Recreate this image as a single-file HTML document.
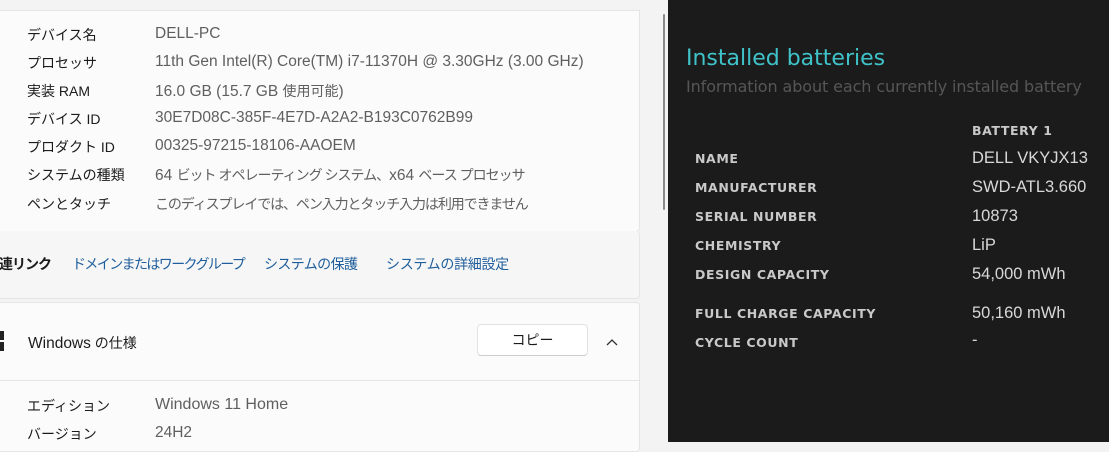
<!DOCTYPE html>
<html><head><meta charset="utf-8"><style>
*{margin:0;padding:0;box-sizing:border-box}
body{width:1109px;height:442px;overflow:hidden;position:relative;background:#f3f3f3;font-family:"Liberation Sans","Noto Sans CJK JP",sans-serif;}
.a{position:absolute;white-space:nowrap}
.l{font-size:14px;color:#1b1b1b}
.v{font-size:15.5px;color:#5f5f5f}
.v .j{font-size:14px}
.card{position:absolute;background:#fbfbfb;border:1px solid #e5e5e5;border-radius:4px}
.lk{font-size:14px;color:#1f5e9c;letter-spacing:-1.6px}
#dark{position:absolute;left:668px;top:0;width:441px;height:442px;background:#1b1b1b}
.dl{position:absolute;left:27px;font-weight:bold;color:#c9c9c9;letter-spacing:0.6px;white-space:nowrap;font-family:"DejaVu Sans",sans-serif;font-size:12.5px}
.dv{position:absolute;left:304px;font-size:16.5px;color:#d8d8d8;white-space:nowrap}
</style></head><body>
<div class="card" style="left:-4px;top:10px;width:644px;height:222px;border-radius:0 0 4px 4px"></div>
<div class="card" style="left:-4px;top:231px;width:644px;height:68px;background:#f6f6f6;border-top:none"></div>
<div class="card" style="left:-4px;top:302px;width:644px;height:150px"></div>
<div class="a" style="left:0;top:380px;width:640px;height:1px;background:#e5e5e5"></div>
<div class="a" style="left:663px;top:14px;width:2px;height:196px;background:#8a8a8a;border-radius:1px"></div>

<div class="a l" style="left:27px;top:25px">デバイス名</div><div class="a v" style="left:155px;top:25px">DELL-PC</div>
<div class="a l" style="left:27px;top:53px">プロセッサ</div><div class="a v" style="left:155px;top:53px">11th Gen Intel(R) Core(TM) i7-11370H @ 3.30GHz (3.00 GHz)</div>
<div class="a l" style="left:27px;top:81px">実装 RAM</div><div class="a v" style="left:155px;top:81px">16.0 GB (15.7 GB <span class="j">使用可能</span>)</div>
<div class="a l" style="left:27px;top:109px">デバイス ID</div><div class="a v" style="left:155px;top:109px">30E7D08C-385F-4E7D-A2A2-B193C0762B99</div>
<div class="a l" style="left:27px;top:137px">プロダクト ID</div><div class="a v" style="left:155px;top:137px">00325-97215-18106-AAOEM</div>
<div class="a l" style="left:27px;top:165px">システムの種類</div><div class="a v" style="left:155px;top:165px">64 <span class="j" style="letter-spacing:-1px">ビット オペレーティング システム、</span>x64 <span class="j" style="letter-spacing:-1px">ベース プロセッサ</span></div>
<div class="a l" style="left:27px;top:194px">ペンとタッチ</div><div class="a v" style="left:155px;top:194px"><span class="j" style="letter-spacing:-1.1px">このディスプレイでは、ペン入力とタッチ入力は利用できません</span></div>

<div class="a l" style="left:-14px;top:254px;font-weight:bold;letter-spacing:-1px">関連リンク</div>
<div class="a lk" style="left:72px;top:254px">ドメインまたはワークグループ</div>
<div class="a lk" style="left:264px;top:254px;letter-spacing:-0.6px">システムの保護</div>
<div class="a lk" style="left:386px;top:254px;letter-spacing:-0.3px">システムの詳細設定</div>

<div class="a" style="left:0;top:331px;width:4px;height:9px;background:#222"></div>
<div class="a" style="left:0;top:342px;width:4px;height:9px;background:#222"></div>
<div class="a l" style="left:28px;top:333px"><span style="font-size:15.5px">Windows</span> の仕様</div>
<div class="a" style="left:477px;top:324px;width:111px;height:32px;background:#fff;border:1px solid #e2e2e2;border-bottom-color:#ccc;border-radius:4px;font-size:14px;color:#1b1b1b;text-align:center;line-height:30px">コピー</div>
<svg class="a" style="left:605px;top:338px" width="14" height="9" viewBox="0 0 14 9"><path d="M2 7 L7 2 L12 7" fill="none" stroke="#333" stroke-width="1.3"/></svg>

<div class="a l" style="left:27px;top:396px">エディション</div><div class="a v" style="left:155px;top:396px;font-size:16px">Windows 11 Home</div>
<div class="a l" style="left:27px;top:424px">バージョン</div><div class="a v" style="left:155px;top:424px">24H2</div>

<div id="dark">
<div class="a" style="left:18px;top:46px;font-size:22px;color:#3fc3c9;font-family:'DejaVu Sans',sans-serif">Installed batteries</div>
<div class="a" style="left:18px;top:77px;color:#565656;font-family:'DejaVu Sans',sans-serif;font-size:16px;letter-spacing:-0.1px">Information about each currently installed battery</div>
<div class="dl" style="left:304px;top:123px">BATTERY 1</div>
<div class="dl" style="top:151px">NAME</div><div class="dv" style="top:149px">DELL VKYJX13</div>
<div class="dl" style="top:180px">MANUFACTURER</div><div class="dv" style="top:178px">SWD-ATL3.660</div>
<div class="dl" style="top:209px">SERIAL NUMBER</div><div class="dv" style="top:207px">10873</div>
<div class="dl" style="top:238px">CHEMISTRY</div><div class="dv" style="top:236px">LiP</div>
<div class="dl" style="top:267px">DESIGN CAPACITY</div><div class="dv" style="top:265px">54,000 mWh</div>
<div class="dl" style="top:306px">FULL CHARGE CAPACITY</div><div class="dv" style="top:304px">50,160 mWh</div>
<div class="dl" style="top:335px">CYCLE COUNT</div><div class="dv" style="top:331px">-</div>
</div>
</body></html>
